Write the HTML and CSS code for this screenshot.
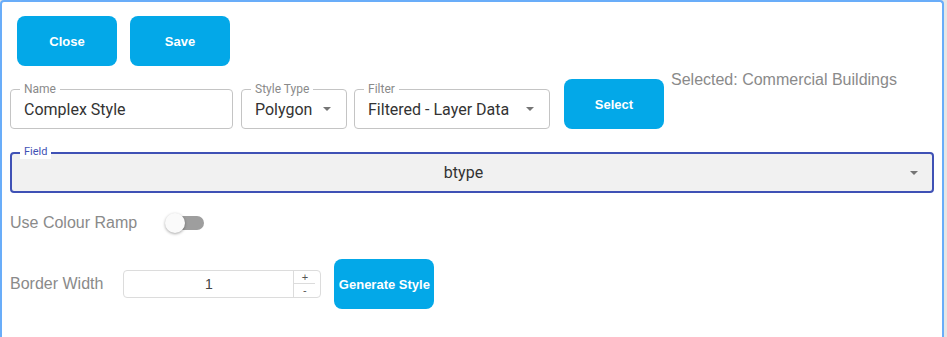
FILE: index.html
```html
<!DOCTYPE html>
<html lang="en">
<head>
  <meta charset="UTF-8">
  <title>Complex Style</title>
  <link rel="stylesheet" href="styles.css">
</head>
<body>
  <div class="panel">
    <div class="actions">
      <button class="btn">Close</button>
      <button class="btn">Save</button>
    </div>

    <div class="row-top">
      <div class="field name-field">
        <span class="field-label">Name</span>
        <span class="field-value">Complex Style</span>
      </div>
      <div class="field type-field">
        <span class="field-label">Style Type</span>
        <span class="field-value">Polygon</span>
        <span class="arrow"></span>
      </div>
      <div class="field filter-field">
        <span class="field-label">Filter</span>
        <span class="field-value">Filtered - Layer Data</span>
        <span class="arrow"></span>
      </div>
      <button class="btn select-btn">Select</button>
      <div class="selected">Selected: Commercial Buildings</div>
    </div>

    <div class="field big-field">
      <span class="field-label">Field</span>
      <span class="field-value">btype</span>
      <span class="arrow"></span>
    </div>

    <div class="toggle-row">
      <span class="plain-label">Use Colour Ramp</span>
      <span class="switch"><span class="track"></span><span class="thumb"></span></span>
    </div>

    <div class="border-row">
      <span class="plain-label">Border Width</span>
      <div class="number-input">
        <span class="number-value">1</span>
        <span class="spin">
          <span class="spin-up">+</span>
          <span class="spin-down">-</span>
        </span>
      </div>
      <button class="btn gen-btn">Generate Style</button>
    </div>
  </div>
</body>
</html>
```

FILE: styles.css
```css
* {
  margin: 0;
  padding: 0;
  box-sizing: border-box;
}

body {
  background: #e6e6e6;
  font-family: Roboto, 'Liberation Sans', sans-serif;
}

.panel {
  width: 944px;
  height: 337px;
  background: #fff;
  border: 2px solid #69adf9;
  border-bottom: none;
  border-radius: 4px 4px 0 0;
  padding: 0 8px;
}

.actions {
  display: flex;
  gap: 13px;
  padding: 14px 0 0 7px;
}

.btn {
  width: 100px;
  height: 50px;
  border: none;
  border-radius: 8px;
  background: #03a8e8;
  color: #fff;
  font-family: 'Liberation Sans', Arial, sans-serif;
  font-weight: bold;
  font-size: 13px;
  cursor: pointer;
}

.row-top {
  display: flex;
  align-items: flex-start;
  margin-top: 5px;
}

.field {
  position: relative;
  display: flex;
  align-items: center;
  height: 40px;
  border: 1px solid #c4c4c4;
  border-radius: 4px;
  padding: 0 13px;
  color: #333;
  font-size: 16px;
}

.field-label {
  position: absolute;
  top: -8px;
  left: 9px;
  padding: 0 4px;
  background: #fff;
  font-size: 12px;
  line-height: 14px;
  color: #8a8a8a;
}

.row-top .field {
  margin-top: 18px;
}

.name-field {
  width: 223px;
}

.type-field {
  width: 106px;
  margin-left: 8px;
  justify-content: space-between;
  padding-right: 15px;
}

.filter-field {
  width: 196px;
  margin-left: 7px;
  justify-content: space-between;
  padding-right: 15px;
}

.arrow {
  width: 0;
  height: 0;
  border-left: 4px solid transparent;
  border-right: 4px solid transparent;
  border-top: 4px solid #757575;
}

.select-btn {
  margin: 8px 0 0 14px;
}

.selected {
  margin-left: 7px;
  font-family: 'Liberation Sans', Arial, sans-serif;
  font-size: 16px;
  color: #8a8a8a;
  line-height: 18px;
}

.big-field {
  margin-top: 23px;
  width: 924px;
  height: 41px;
  border: 2px solid #3f51b5;
  background: #f1f1f1;
  padding: 0 14px 0 15px;
}

.big-field .field-label {
  top: -9px;
  left: 8px;
  color: #3f51b5;
  font-size: 11px;
}

.big-field .field-value {
  flex: 1;
  text-align: center;
  padding-right: 10px;
}

.toggle-row {
  display: flex;
  align-items: center;
  height: 20px;
  margin-top: 20px;
}

.plain-label {
  font-family: 'Liberation Sans', Arial, sans-serif;
  font-size: 16px;
  color: #8a8a8a;
}

.switch {
  position: relative;
  width: 39px;
  height: 20px;
  margin-left: 28px;
}

.track {
  position: absolute;
  left: 5px;
  top: 3px;
  width: 34px;
  height: 14px;
  border-radius: 7px;
  background: #9e9e9e;
}

.thumb {
  position: absolute;
  left: 0;
  top: 0;
  width: 20px;
  height: 20px;
  border-radius: 50%;
  background: #fafafa;
  box-shadow: 0 1px 3px rgba(0,0,0,0.35);
}

.border-row {
  display: flex;
  align-items: center;
  margin-top: 26px;
}

.number-input {
  display: flex;
  width: 198px;
  height: 28px;
  margin-left: 20px;
  border: 1px solid #dcdcdc;
  border-radius: 4px;
}

.number-value {
  flex: 1;
  text-align: center;
  line-height: 26px;
  font-family: 'Liberation Sans', Arial, sans-serif;
  font-size: 14px;
  color: #444;
}

.spin {
  display: flex;
  flex-direction: column;
  width: 27px;
  border-left: 1px solid #dcdcdc;
  font-family: 'Liberation Sans', Arial, sans-serif;
  font-size: 11px;
  color: #555;
}

.spin-up,
.spin-down {
  height: 13px;
  line-height: 12px;
  text-align: center;
  width: 21px;
}

.spin-up {
  border-bottom: 1px solid #dcdcdc;
}

.gen-btn {
  margin-left: 13px;
}
```
